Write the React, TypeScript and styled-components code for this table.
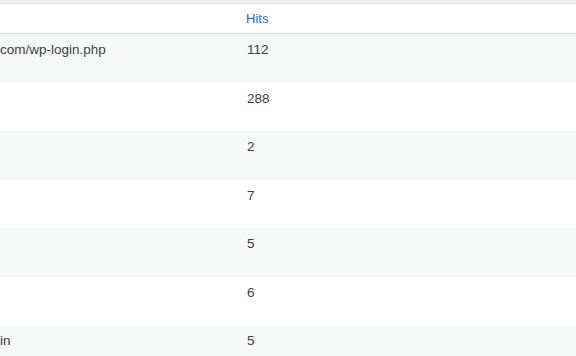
import React from "react";
import styled, { createGlobalStyle } from "styled-components";

const Global = createGlobalStyle`
  html, body { margin: 0; padding: 0; background: #ffffff; }
  body { font-family: "Liberation Sans", Arial, sans-serif; font-size: 13px; color: #3c434a; }
`;

const Page = styled.div`
  width: 576px;
  height: 356px;
  overflow: hidden;
  background: #ffffff;
`;

const TopStrip = styled.div`
  height: 3px;
  background: #f0f0f1;
  border-bottom: 1px solid #e2e3e4;
`;

const Table = styled.div`
  display: flex;
  flex-direction: column;
`;

const HeaderRow = styled.div`
  display: grid;
  grid-template-columns: 246px 1fr;
  height: 30px;
  box-sizing: border-box;
  padding-top: 5px;
  line-height: 20px;
  border-bottom: 1px solid #d5d6d8;
  background: #ffffff;
`;

const HeadCell = styled.div`
  color: #2271b1;
  font-size: 13px;
`;

const Row = styled.div<{ $striped: boolean }>`
  display: grid;
  grid-template-columns: 246px 1fr;
  height: 48.5px;
  box-sizing: border-box;
  padding-top: 6px;
  line-height: 20px;
  background: ${(p) => (p.$striped ? "#f6f7f7" : "#ffffff")};
`;

const Cell = styled.div<{ $indent?: number }>`
  color: #3c434a;
  font-size: 13.5px;
  white-space: nowrap;
  padding-left: ${(p) => p.$indent ?? 0}px;
`;

const rows = [
  { url: "com/wp-login.php", hits: "112" },
  { url: "", hits: "288" },
  { url: "", hits: "2" },
  { url: "", hits: "7" },
  { url: "", hits: "5" },
  { url: "", hits: "6" },
  { url: "in", hits: "5" },
];

export default function App() {
  return (
    <Page>
      <Global />
      <TopStrip />
      <Table>
        <HeaderRow>
          <HeadCell />
          <HeadCell>Hits</HeadCell>
        </HeaderRow>
        {rows.map((r, i) => (
          <Row key={i} $striped={i % 2 === 0}>
            <Cell>{r.url}</Cell>
            <Cell $indent={1}>{r.hits}</Cell>
          </Row>
        ))}
      </Table>
    </Page>
  );
}
